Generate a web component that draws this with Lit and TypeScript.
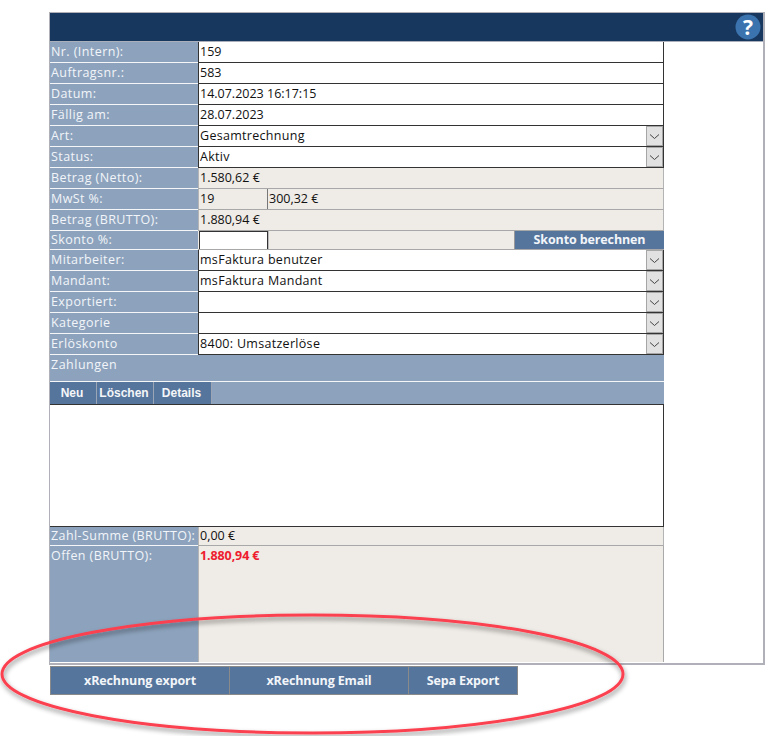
import { LitElement, html, css, svg } from "lit";
import { customElement } from "lit/decorators.js";

type Row = { l: string; v?: string; kind: "input" | "select" | "calc" };

const top: Row[] = [
  { l: "Nr. (Intern):", v: "159", kind: "input" },
  { l: "Auftragsnr.:", v: "583", kind: "input" },
  { l: "Datum:", v: "14.07.2023 16:17:15", kind: "input" },
  { l: "Fällig am:", v: "28.07.2023", kind: "input" },
  { l: "Art:", v: "Gesamtrechnung", kind: "select" },
  { l: "Status:", v: "Aktiv", kind: "select" },
  { l: "Betrag (Netto):", v: "1.580,62 €", kind: "calc" },
];
const lower: Row[] = [
  { l: "Mitarbeiter:", v: "msFaktura benutzer", kind: "select" },
  { l: "Mandant:", v: "msFaktura Mandant", kind: "select" },
  { l: "Exportiert:", v: "", kind: "select" },
  { l: "Kategorie", v: "", kind: "select" },
  { l: "Erlöskonto", v: "8400: Umsatzerlöse", kind: "select" },
];

@customElement("app-root")
export class AppRoot extends LitElement {
  static styles = css`
    :host {
      display: block;
      position: relative;
      width: 781px;
      height: 736px;
      background: #fff;
      overflow: hidden;
      font-family: "Open Sans", "Noto Sans", sans-serif;
      font-size: 12.5px;
      color: #111;
    }
    .page { padding: 12px 0 0 49px; }
    .frame {
      box-sizing: border-box;
      width: 716px;
      height: 653px;
      border: 1px solid #b0b0b8;
      border-right-width: 2px;
      border-bottom-width: 2px;
      background: #fff;
    }
    .head {
      height: 28px;
      background: #17375e;
      display: flex;
      justify-content: flex-end;
      align-items: center;
      padding-right: 2px;
      border-bottom: 1px solid #a9b0bb;
    }
    .head svg { display: block; }
    .form { width: 614px; }
    .row {
      display: grid;
      grid-template-columns: 148px 1fr;
      height: 21px;
      line-height: 20px;
    }
    .short { height: 19px; line-height: 18px; }
    .label {
      background: #8da3bd;
      color: #f2f5f9;
      padding-left: 1px;
      border-bottom: 1px solid #f4f6f8;
      white-space: nowrap;
      letter-spacing: 0.42px;
      overflow: hidden;
    }
    .val {
      box-sizing: border-box;
      padding-left: 1px;
      white-space: nowrap;
      min-width: 0;
    }
    .select > span:first-child { letter-spacing: 0.3px; }
    .input, .select {
      background: #fff;
      border: 1px solid #333;
      border-top-width: 0;
      border-bottom-width: 1px;
      display: flex;
      justify-content: space-between;
    }
    .arrow {
      box-sizing: border-box;
      width: 17px;
      height: 20px;
      background: #e1e1e1;
      border: 1px solid #a6a6a6;
      display: flex;
      align-items: center;
      justify-content: center;
    }
    .calc {
      background: #efebe6;
      border-left: 1px solid #b4b4b4;
      border-bottom: 1px solid #a8a8a8;
      border-right: 1px solid #b4b4b4;
      display: flex;
    }
    .split { display: grid; grid-template-columns: 68px 1fr; padding-left: 0; }
    .split > span { padding-left: 1px; }
    .split > span + span { border-left: 1px solid #777; padding-left: 1px; }
    .skonto {
      display: grid;
      grid-template-columns: 69px 1fr 150px;
      border-bottom: 1px solid #a8a8a8;
      background: #efebe6;
    }
    .skonto .field {
      background: #fff;
      border: 1px solid #333;
      border-bottom: 0;
    }
    .skonto .gap { border-left: 1px solid #bbb; }
    .skonto button, .actions button {
      font: inherit;
      font-weight: 700;
      color: #f2f5f9;
      background: #56759d;
      cursor: pointer;
      letter-spacing: -0.12px;
    }
    .skonto button {
      border: 0;
      border-left: 1px solid #999;
      padding: 0;
    }
    .section {
      height: 27px;
      background: #8da3bd;
      color: #f2f5f9;
      padding-left: 1px;
      line-height: 19px;
      letter-spacing: 0.5px;
      box-sizing: border-box;
      border-bottom: 1px solid #f4f6f8;
    }
    .tabs {
      height: 23px;
      background: #8da3bd;
      display: flex;
      border-bottom: 1px solid #333;
      box-sizing: border-box;
    }
    .tabs span {
      box-sizing: border-box;
      background: #56759d;
      color: #f4f6f8;
      font-family: "Liberation Sans", Arial, sans-serif;
      font-weight: 700;
      font-size: 12px;
      line-height: 22px;
      text-align: center;
      padding-right: 2px;
      border-right: 1px solid #9aa6b5;
    }
    .t1 { width: 47px; }
    .t2 { width: 57px; }
    .t3 { width: 58px; }
    .list {
      height: 122px;
      box-sizing: border-box;
      background: #fff;
      border-right: 1px solid #333;
      border-bottom: 1px solid #333;
    }
    .open { height: 116px; }
    .open .label { border-bottom: 0; }
    .open .calc { border-bottom: 0; border-right-color: #aaa; }
    .red { color: #ee1c2e; font-weight: 700; letter-spacing: -0.1px; }
    .actions {
      display: flex;
      padding: 1px 0 0 50px;
      margin-left: -49px;
    }
    .actions button {
      box-sizing: border-box;
      height: 29px;
      border: 1px solid #8a8a8a;
      padding: 0;
    }
    .actions button + button { margin-left: -1px; }
    .b1 { width: 180px; }
    .b2 { width: 180px; }
    .b3 { width: 110px; }
    .oval { position: absolute; left: 0; top: 0; pointer-events: none; }
  `;

  private arrow() {
    return html`<span class="arrow"><svg width="11" height="7" viewBox="0 0 11 7"><path d="M1 1.5 L5.5 5.5 L10 1.5" fill="none" stroke="#444" stroke-width="1"/></svg></span>`;
  }

  private row(r: Row) {
    return html`<div class="row">
      <div class="label">${r.l}</div>
      <div class="val ${r.kind}"><span>${r.v}</span>${r.kind === "select" ? this.arrow() : ""}</div>
    </div>`;
  }

  render() {
    return html`
      <div class="page">
        <div class="frame">
          <div class="head">
            <svg width="26" height="26" viewBox="0 0 26 26">
              <circle cx="13" cy="13" r="12.5" fill="#3b73ae"/>
              <text x="13" y="20.5" text-anchor="middle" fill="#fff" font-family="Open Sans, sans-serif" font-weight="700" font-size="21">?</text>
            </svg>
          </div>
          <div class="form">
            ${top.map((r) => this.row(r))}
            <div class="row">
              <div class="label">MwSt %:</div>
              <div class="val calc split"><span>19</span><span>300,32 €</span></div>
            </div>
            <div class="row">
              <div class="label">Betrag (BRUTTO):</div>
              <div class="val calc"><span>1.880,94 €</span></div>
            </div>
            <div class="row short">
              <div class="label">Skonto %:</div>
              <div class="val skonto">
                <div class="field"></div>
                <div class="gap"></div>
                <button>Skonto berechnen</button>
              </div>
            </div>
            ${lower.map((r) => this.row(r))}
            <div class="section">Zahlungen</div>
            <div class="tabs">
              <span class="t1">Neu</span><span class="t2">Löschen</span><span class="t3">Details</span>
            </div>
            <div class="list"></div>
            <div class="row short">
              <div class="label">Zahl-Summe (BRUTTO):</div>
              <div class="val calc"><span>0,00 €</span></div>
            </div>
            <div class="row open">
              <div class="label">Offen (BRUTTO):</div>
              <div class="val calc"><span class="red">1.880,94 €</span></div>
            </div>
          </div>
        </div>
        <div class="actions">
          <button class="b1">xRechnung export</button>
          <button class="b2">xRechnung Email</button>
          <button class="b3">Sepa Export</button>
        </div>
      </div>
      <svg class="oval" width="781" height="736" viewBox="0 0 781 736">
        <defs>
          <filter id="sh" x="-5%" y="-20%" width="110%" height="140%">
            <feDropShadow dx="1" dy="3" stdDeviation="2.5" flood-color="#000" flood-opacity="0.45"/>
          </filter>
        </defs>
        ${svg`<ellipse cx="312.5" cy="674" rx="310.5" ry="59" fill="none" stroke="#fb4150" stroke-width="3" filter="url(#sh)"/>`}
      </svg>
    `;
  }
}
